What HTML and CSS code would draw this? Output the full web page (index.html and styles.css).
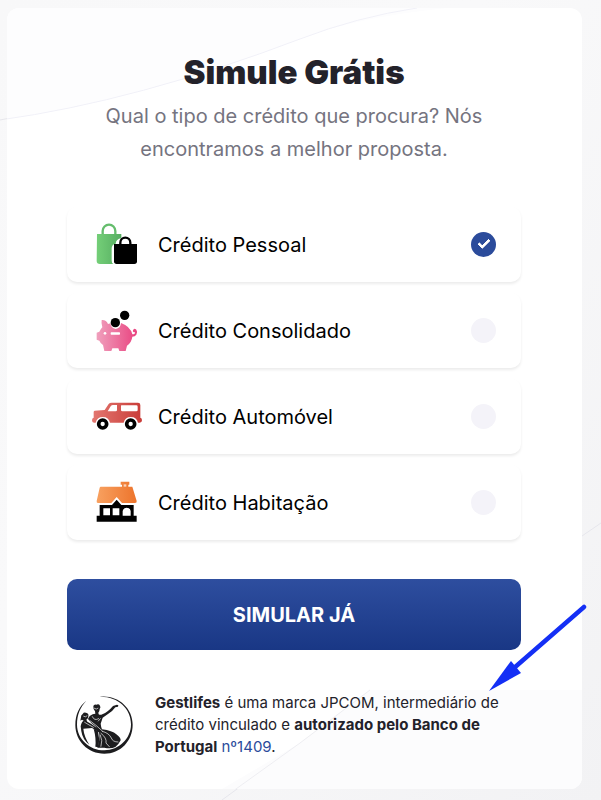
FILE: index.html
```
<!doctype html>
<html lang="pt">
  <head>
    <meta charset="UTF-8" />
    <meta name="viewport" content="width=device-width, initial-scale=1.0" />
    <title>Simule Grátis | Gestlifes</title>
    <link rel="stylesheet" href="styles.css">
  </head>

  <body>
    <svg class="backdrop" viewBox="0 0 601 800" preserveAspectRatio="none" aria-hidden="true">
      <defs>
        <linearGradient id="side" x1="0" x2="1" y1="0" y2="1">
          <stop offset="0" stop-color="#f8f8f9" />
          <stop offset="0.4" stop-color="#f9f9fa" />
          <stop offset="1" stop-color="#f2f2f4" />
        </linearGradient>
      </defs>
      <path d="M0 0H601V800H0Z" fill="url(#side)" />
      <path d="M0 120L10 118M582 536L601 523M222 800L300 743L370 690" fill="none" stroke="#e6e6ec" />
    </svg>
    <main class="card">
      <!-- curvas de fundo -->
      <svg class="card-lines" viewBox="0 0 575 781" preserveAspectRatio="none" aria-hidden="true">
        <path d="M0 0H440Q350 9 293 31Q130 93 0 111Z" fill="#fdfdfe" />
        <path d="M-7 112Q130 93 293 31Q350 9 410 0" fill="none" stroke="#f1f1f8" />
        <path d="M215 781L293 735L363 682H575V781Z" fill="#fcfcfd" />
        <path d="M215 791L293 735L363 682" fill="none" stroke="#eeeef2" />
      </svg>
      <form class="simulator">
        <h1 class="title">Simule Grátis</h1>
        <p class="subtitle">Qual o tipo de crédito que procura? Nós encontramos a melhor proposta.</p>
        <div class="options">
          <label class="option" for="pessoal">
            <svg class="option-icon" viewBox="30 0 195 180" aria-hidden="true">
              <defs>
                <linearGradient id="green"><stop offset="0" stop-color="#74cf78" /><stop offset="1" stop-color="#56ad61" /></linearGradient>
              </defs>
              <path d="M68 60V48a19 19 0 0 1 38 0v12" fill="none" stroke="#65bd6d" stroke-width="7" />
              <path d="M51 57H124V70Q108 72 107 86Q95 88 95 100V137Q95 144 100 147H60Q50 147 50 138Z" fill="url(#green)" />
              <path d="M121 91V83a15 15 0 0 1 30 0v8" fill="none" stroke="#000" stroke-width="7" />
              <path d="M102 87H171V139Q171 147 163 147H110Q102 147 102 139Z" />
            </svg>
            <span class="option-name">Crédito Pessoal</span>
            <input class="option-radio" type="radio" name="credito" id="pessoal" checked />
          </label>
          <label class="option" for="consolidado">
            <svg class="option-icon" viewBox="30 0 195 180" aria-hidden="true">
              <defs>
                <linearGradient id="pink"><stop offset="0" stop-color="#f0a0bd" /><stop offset="1" stop-color="#e9427f" /></linearGradient>
              </defs>
              <path d="M65 57Q79 56 84 69Q91 67 91 67Q93 82 107 84Q122 82 123 66Q151 76 157 100Q166 100 165 94Q157 94 159 88Q162 80 169 86Q174 93 169 101Q165 107 157 107Q155 124 141 134L137 150H118L115 142H97L94 150H73L69 132Q62 128 58 119L50 116V95L58 92Q61 85 67 79Q63 67 65 57Z" fill="url(#pink)" />
              <rect x="92" y="94" width="28" height="7" rx="2" fill="#fff" />
              <circle cx="75" cy="97" r="4" fill="#fff" />
              <circle cx="106" cy="65" r="14" />
              <circle cx="134" cy="43" r="14" />
            </svg>
            <span class="option-name">Crédito Consolidado</span>
            <input class="option-radio" type="radio" name="credito" id="consolidado" />
          </label>
          <label class="option" for="automovel">
            <svg class="option-icon" viewBox="30 4 195 180" aria-hidden="true">
              <defs>
                <linearGradient id="red"><stop offset="0" stop-color="#e37871" /><stop offset="1" stop-color="#c93c38" /></linearGradient>
              </defs>
              <path d="M44 75L74 73L86 55Q89 51 95 51H174Q181 51 181 58V96Q186 97 186 104Q186 111 179 111H174A22 22 0 0 0 131 111H90A22 22 0 0 0 47 111H42Q36 111 36 104Q36 97 41 96V79Q41 76 44 75Z" fill="url(#red)" />
              <path d="M83 77L92 62Q95 58 99 58H111V73Q111 77 107 77ZM124 59H169Q173 59 173 63V73Q173 77 169 77H127Q123 77 123 73V62Q123 59 124 59Z" fill="#fff" />
              <g fill="#fff" stroke="#000" stroke-width="11">
                <circle cx="68" cy="115" r="12" />
                <circle cx="152" cy="115" r="12" />
              </g>
            </svg>
            <span class="option-name">Crédito Automóvel</span>
            <input class="option-radio" type="radio" name="credito" id="automovel" />
          </label>
          <label class="option" for="habitacao">
            <svg class="option-icon" viewBox="30 7 195 180" aria-hidden="true">
              <defs>
                <linearGradient id="orange"><stop offset="0" stop-color="#f8a160" /><stop offset="1" stop-color="#ed742c" /></linearGradient>
              </defs>
              <path d="M62 48H126V42H122V33H148V42H145V48H157L170 91Q171 97 165 97H126L110 79L94 97H54Q49 97 50 91L59 51Q60 48 62 48Z" fill="url(#orange)" />
              <path d="M131 41H139V48H131Z" fill="#fff" opacity=".65" />
              <path d="M59 103H96L110 87L124 103H161V135H170V153H50V135H59Z" />
              <path d="M70 113H90V134H70ZM98 113H118V134H98ZM128 135V121Q131 111 140 111Q150 111 152 121V135Z" fill="#fff" />
            </svg>
            <span class="option-name">Crédito Habitação</span>
            <input class="option-radio" type="radio" name="credito" id="habitacao" />
          </label>
        </div>
        <button class="submit" type="button">SIMULAR JÁ</button>
      </form>
      <footer class="legal">
        <svg class="legal-logo" viewBox="30 36 174 174" role="img" aria-label="Banco de Portugal">
          <g fill="#1d1d1f">
            <path d="M103 38C157 31 203 70 203 122C203 171 166 209 118 209C69 209 31 171 31 123C31 91 43 66 64 50C46 69 36 91 36 122C36 164 73 199 118 199C162 199 198 164 198 121C198 73 158 36 103 38Z" />
            <path d="M85 66Q87 60 94 62Q101 58 105 65Q108 70 104 75Q104 82 100 86L101 91Q105 94 112 91Q129 84 144 66L151 64Q156 60 160 64L159 68L151 70Q142 83 129 90L113 101L107 119Q108 129 111 136Q142 140 154 151Q168 162 167 169Q162 180 151 189Q137 196 118 191H97Q106 169 102 143L91 127L79 117L69 105Q72 95 83 91L91 89L90 82Q84 75 85 66Z" />
            <path d="M48 100Q47 94 53 90Q57 83 65 87Q72 89 70 97Q71 105 64 107L67 113Q80 119 96 132L107 143L101 145L81 132L55 134Q57 157 73 182Q53 168 49 142L47 127Q49 114 56 110L51 107L46 110Z" />
            <path d="M86 134L99 142Q105 165 101 190L91 188Q94 163 86 134Z" />
          </g>
          <g fill="none" stroke="#fff" stroke-width="2" stroke-linecap="round">
            <path d="M82 98Q88 112 101 104M75 110Q92 122 112 141M59 115Q72 123 85 130M88 73Q94 78 99 73M56 97Q62 101 66 96" />
            <path d="M112 142Q132 147 139 162Q143 174 159 174M108 148Q126 162 123 177L133 188M106 153Q114 170 108 187M100 111L106 104" />
          </g>
        </svg>
        <p class="legal-text">
          <strong>Gestlifes</strong> é uma marca JPCOM, intermediário de crédito vinculado e
          <strong>autorizado pelo Banco de Portugal</strong> <a href="#">nº1409</a>.
        </p>
      </footer>
      <svg class="arrow" viewBox="0 0 100 90" aria-hidden="true">
        <path d="M97 5L27 66" stroke="#142ff5" stroke-width="4.5" stroke-linecap="round" />
        <path d="M2 89L24 59L34 71Z" fill="#142ff5" />
      </svg>
    </main>
  </body>
</html>
```

FILE: styles.css
```
* {
  margin: 0;
  padding: 0;
  box-sizing: border-box;
}
:root {
  --main-blue: #2b4b9b;
  --main-font-color: #23222a;
  --main-gray: #757480;
  --radio-background: #f4f3f9;
}
body {
  position: relative;
  min-height: 100vh;
  padding: 8px 19px 11px 7px;
  background-color: #f7f7f9;
  color: var(--main-font-color);
  font-family: Inter, "Liberation Sans", sans-serif;
}
.backdrop {
  position: absolute;
  top: 0;
  left: 0;
  width: 100%;
  height: 100%;
}
.card {
  position: relative;
  padding: 44px 61px 31px 60px;
  border-radius: 12px;
  background-color: #fff;
}
.card-lines {
  position: absolute;
  top: 0;
  left: 0;
  width: 100%;
  height: 100%;
  border-radius: 12px;
}
.simulator {
  position: relative;
}
.title {
  font-size: 33px;
  font-weight: 900;
  line-height: 40px;
  text-align: center;
}
.subtitle {
  margin: 8px 30px 41px;
  color: var(--main-gray);
  font-size: 20px;
  line-height: 33px;
  text-align: center;
}
.options {
  display: flex;
  flex-direction: column;
  gap: 11px;
}
.option {
  display: flex;
  align-items: center;
  height: 75px;
  padding: 0 25px 0 23px;
  border-radius: 10px;
  background-color: #fff;
  box-shadow: 0 2px 3px rgba(0, 0, 0, 0.08);
  cursor: pointer;
}
.option-icon {
  flex: none;
  width: 65px;
  height: 60px;
}
.option-name {
  flex: 1;
  margin-left: 3px;
  color: #000;
  font-size: 20px;
  line-height: 24px;
}
.option-radio {
  display: flex;
  justify-content: center;
  align-items: center;
  width: 25px;
  height: 25px;
  border-radius: 50%;
  background-color: var(--radio-background);
  appearance: none;
  cursor: pointer;
}
.option-radio:checked {
  background-color: var(--main-blue);
}
.option-radio:checked::after {
  content: "";
  width: 9px;
  height: 4px;
  margin-bottom: 4px;
  border: solid #fff;
  border-width: 0 0 3px 3px;
  border-radius: 1px;
  transform: rotate(-45deg);
}
.submit {
  display: block;
  width: 100%;
  height: 71px;
  margin-top: 39px;
  border: 0;
  border-radius: 10px;
  background: linear-gradient(#2e4e9f, #193785);
  color: #fff;
  font-family: inherit;
  font-size: 20px;
  font-weight: 700;
  cursor: pointer;
}
.legal {
  position: relative;
  display: flex;
  align-items: center;
  gap: 22px;
  margin-top: 42px;
  padding-left: 8px;
}
.legal-logo {
  flex: none;
  width: 58px;
  height: 58px;
}
.legal-text {
  font-size: 15px;
  line-height: 22px;
}
.legal-text a {
  color: var(--main-blue);
  text-decoration: none;
}
.arrow {
  position: absolute;
  right: -5px;
  bottom: 97px;
  width: 100px;
  height: 90px;
}
```
